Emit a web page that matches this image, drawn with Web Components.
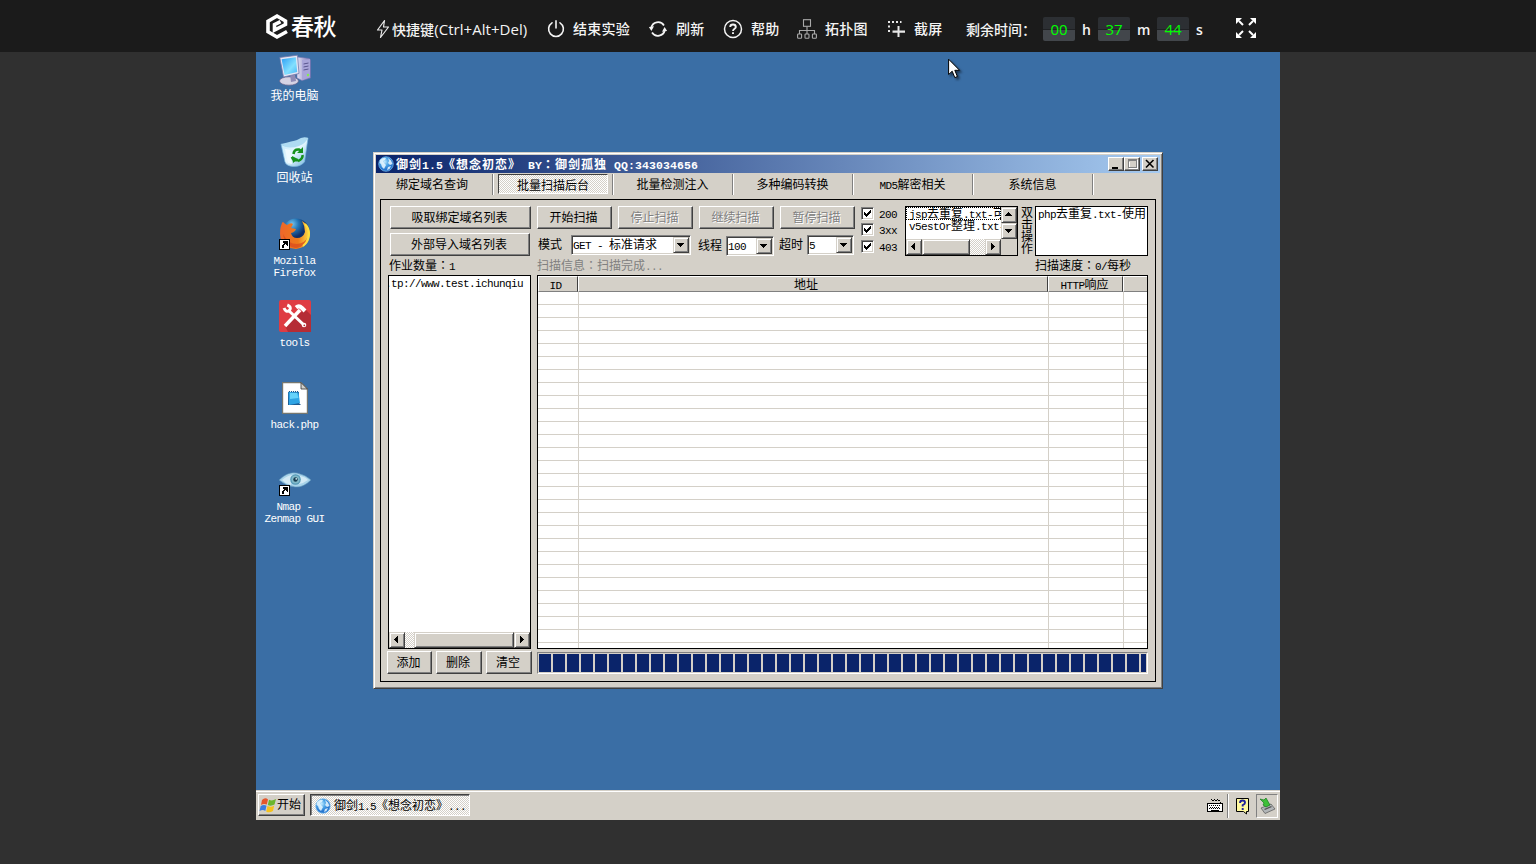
<!DOCTYPE html>
<html lang="zh-CN">
<head>
<meta charset="utf-8">
<title>e春秋</title>
<style>
html,body{margin:0;height:100%;overflow:hidden;background:#303030}
</style>
</head>
<body>
<lab-page></lab-page>
<script>
const define = (name, css, html) => customElements.define(name, class extends HTMLElement {
  connectedCallback() {
    if (this.shadowRoot) return;
    const root = this.attachShadow({mode: 'open'});
    root.innerHTML = `<style>*{box-sizing:border-box}:host{box-sizing:border-box;display:block;flex:none}${css}</style>` +
      (typeof html === 'function' ? html(this) : html);
  }
});

/* Text on the 6/12 px character grid of the remote desktop */
define('px-text', `
:host{display:inline-block;white-space:pre;font:12px/10px "Noto Sans CJK SC",sans-serif;height:12px;vertical-align:top}
.l{font-family:"Liberation Mono",monospace;font-size:11px;letter-spacing:-.6px}
.c{font-family:"Noto Sans CJK TC",sans-serif}
:host([bold]){font-weight:700;letter-spacing:1px;line-height:12px}
:host([bold]) .l{font-size:11.5px;letter-spacing:.1px}
`, el => el.getAttribute('t').replace(/[\x20-\x7e]+|：/g, m => m === '：' ? `<span class="c" lang="zh-TW">${m}</span>` : `<span class="l">${m}</span>`));

/* ---------- top bar ---------- */
define('bar-item', `
:host{display:flex;align-items:center;height:24px;width:var(--w);color:#f4f4f4;font:500 14px/24px "Open Sans","Noto Sans CJK SC",sans-serif;white-space:nowrap;letter-spacing:var(--ls,.25px)}
.i{width:var(--iw);flex:none;display:flex;align-items:center}
`, `<span class="i"><slot name="icon"></slot></span><slot></slot>`);
define('time-box', `
:host{width:32px;height:24px;background:linear-gradient(#2c2f33 0 12px,#1f2124 12px 13px,#42464b 13px);border-radius:2px;color:#0f0;text-align:center;font:15px/25px "Open Sans",sans-serif}
`, `<slot></slot>`);
define('top-bar', `
:host{display:flex;height:52px;background:#1b1b1b;padding-left:265px;align-items:flex-start}
.logo{display:flex;width:111px;height:28px;margin-top:13px;color:#fff;font:500 23px/25px "Noto Sans CJK SC",sans-serif;letter-spacing:-.6px}
.logo svg{margin-right:2px;flex:none}
bar-item{margin-top:17px}
.clock{display:flex;width:270px;margin-top:17px;color:#f4f4f4;font:500 14px/26px "Open Sans","Noto Sans CJK SC",sans-serif}
.lab{width:77px;white-space:nowrap}.u{padding-left:7px;flex:none;font-weight:600}
.full{margin-top:18px}
`, `
<div class="logo"><svg width="24" height="27" viewBox="0 0 24 27" fill="none" stroke="#fff" stroke-width="3.6" stroke-linejoin="miter"><path d="M22 18.5 L12 24 L3 18.8 V8.2 L12 3 L20.5 8 V11.5 L9.5 17 V11.7 L15.5 8.7"/></svg><span>春秋</span></div>
<bar-item style="--w:171px;--iw:16px;--ls:.05px"><svg slot="icon" width="14" height="20" viewBox="0 0 14 20" fill="none" stroke="#e8e8e8" stroke-width="1.2" stroke-linejoin="round"><path d="M8.5 1.5 L1.5 11 H6 L4.5 18.5 L12.5 8 H7.5 Z"/></svg><span>快捷键<span style="font-size:15px">(Ctrl+Alt+Del)</span></span></bar-item>
<bar-item style="--w:102px;--iw:26px"><svg slot="icon" width="18" height="18" viewBox="0 0 18 18" fill="none" stroke="#f4f4f4" stroke-width="1.6" stroke-linecap="round"><path d="M5 2.8 A7.4 7.4 0 1 0 13 2.8 M9 .9 V8"/></svg>结束实验</bar-item>
<bar-item style="--w:74px;--iw:27px"><svg slot="icon" width="18" height="18" viewBox="0 0 18 18" fill="none" stroke="#f4f4f4" stroke-width="1.7"><path d="M2.2 8 A7 7 0 0 1 15 5.5 M15.8 10 A7 7 0 0 1 3 12.5"/><path fill="#f4f4f4" stroke="none" d="M-.2 7 L5 6.3 L2.4 11Z M18.2 11 L13 11.7 L15.6 7Z"/></svg>刷新</bar-item>
<bar-item style="--w:74px;--iw:28px"><svg slot="icon" width="20" height="20" viewBox="0 0 20 20" fill="none" stroke="#f4f4f4"><circle cx="10" cy="10" r="8.5" stroke-width="1.5"/><path stroke-width="1.9" d="M7.2 8 C7.2 4.7 12.8 4.7 12.8 8 C12.8 9.8 10 9.6 10 12 M10 13.2 V15"/></svg>帮助</bar-item>
<bar-item style="--w:91px;--iw:28px"><svg slot="icon" width="20" height="20" viewBox="0 0 20 20" fill="none" stroke="#aaa" stroke-width="1.1"><rect x="6.5" y=".7" width="7" height="6.6"/><path d="M10 7.5 V15 M2.5 15 V11.5 H17.5 V15"/><rect x=".6" y="15" width="4" height="4.2" rx=".8"/><rect x="8" y="15" width="4" height="4.2" rx=".8"/><rect x="15.4" y="15" width="4" height="4.2" rx=".8"/></svg>拓扑图</bar-item>
<bar-item style="--w:78px;--iw:26px"><svg slot="icon" width="18" height="18" viewBox="0 0 18 18" fill="#e8e8e8"><path d="M0 1h2v2H0zM4 1h2v2H4zM8 1h2v2H8zM12 1h1.5v2H12zM0 5.500h2v2H0zM0 10h2v2H0zM9.500 6h2v4.500h5.500v2.200h-5.500v4.300h-2v-4.300H4.500v-2.200h5z"/></svg>截屏</bar-item>
<div class="clock"><span class="lab">剩余时间：</span><time-box>00</time-box><span class="u" style="width:23px">h</span><time-box>37</time-box><span class="u" style="width:27px">m</span><time-box>44</time-box><span class="u">s</span></div>
<svg class="full" width="20" height="20" viewBox="0 0 20 20" fill="#fff" stroke="#fff" stroke-width="2"><path d="M3 3 L7 7 M17 3 L13 7 M3 17 L7 13 M17 17 L13 13"/><path stroke="none" d="M0 0H6L0 6ZM20 0H14L20 6ZM0 20H6L0 14ZM20 20H14L20 14Z"/></svg>
`);

/* ---------- classic controls ---------- */
define('c-button', `
:host{display:flex;align-items:center;justify-content:center;height:23px;background:#d4d0c8;border:1px solid;border-color:#fff #404040 #404040 #fff;box-shadow:inset -1px -1px #808080;padding:0 2px 0 0}
:host([disabled]){color:#808080;text-shadow:1px 1px #fff}
`, `<slot></slot>`);
define('c-arrow', `
:host{display:flex;align-items:center;justify-content:center;width:16px;height:var(--h,16px);background:#d4d0c8;border:1px solid;border-color:#d4d0c8 #404040 #404040 #d4d0c8;box-shadow:inset 1px 1px #fff,inset -1px -1px #808080;padding:0 1px 1px 0}
`, el => `<svg width="7" height="7" viewBox="0 0 7 7" shape-rendering="crispEdges"><path d="${{
  down:'M0 2h7v1H0zM1 3h5v1H1zM2 4h3v1H2zM3 5h1v1H3z', up:'M3 1h1v1H3zM2 2h3v1H2zM1 3h5v1H1zM0 4h7v1H0z',
  left:'M1 3h1v1H1zM2 2h1v3H2zM3 1h1v5H3zM4 0h1v7H4z', right:'M5 3h1v1H5zM4 2h1v3H4zM3 1h1v5H3zM2 0h1v7H2z'}[el.getAttribute('dir')]}"/></svg>`);
define('c-hscroll', `
:host{display:flex;height:16px;background:repeating-conic-gradient(#fff 0 25%,#d4d0c8 0 50%) 0 0/2px 2px}
.thumb{width:var(--t);margin-left:var(--a,0);margin-right:auto;background:#d4d0c8;border:1px solid;border-color:#d4d0c8 #404040 #404040 #d4d0c8;box-shadow:inset 1px 1px #fff,inset -1px -1px #808080}
`, `<c-arrow dir="left"></c-arrow><div class="thumb"></div><c-arrow dir="right"></c-arrow>`);
define('c-combo', `
:host{display:flex;height:20px;background:#fff;border:1px solid;border-color:#808080 #fff #fff #808080;box-shadow:inset 1px 1px #404040,inset -1px -1px #d4d0c8;padding:1px 1px 1px 1px}
px-text{margin-top:2px;flex:1}
c-arrow{--h:16px}
`, el => `<px-text t="${el.getAttribute('value')}"></px-text><c-arrow dir="down"></c-arrow>`);
define('c-check', `
:host{display:flex;height:13px;gap:5px}
.b{width:13px;height:13px;background:#fff;border:1px solid;border-color:#808080 #fff #fff #808080;box-shadow:inset 1px 1px #404040,inset -1px -1px #d4d0c8}
svg{display:block;margin:2px}
px-text{margin-top:1px}
`, el => `<div class="b"><svg width="7" height="7" viewBox="0 0 7 7" shape-rendering="crispEdges"><path d="M0 2h1v3H0zM1 3h1v3H1zM2 4h1v3H2zM3 3h1v3H3zM4 2h1v3H4zM5 1h1v3H5zM6 0h1v3H6z"/></svg></div><px-text t="${el.getAttribute('label')}"></px-text>`);
define('globe-icon', `:host{width:16px;height:16px}svg{display:block}`,
`<svg width="16" height="16" viewBox="0 0 16 16"><defs><radialGradient id="g" cx=".4" cy=".35"><stop offset="0" stop-color="#c4ebff"/><stop offset=".55" stop-color="#4da6e8"/><stop offset="1" stop-color="#2877cf"/></radialGradient></defs><circle cx="8" cy="8" r="7.3" fill="url(#g)" stroke="#7dc0f0" stroke-width=".7"/><path fill="#eaf8ff" opacity=".85" d="M2 4 Q5 1 8 2 L7 4 L5 5 L6 7 L8 9 L6 13 L4 11 L3 8 L1.5 7ZM10 2 L13 4.5 L14.5 8 L12 9 L10 7 L11 5ZM10 11 L13 10 L11.5 13 L9 14Z"/></svg>`);

/* ---------- scanner window ---------- */
define('title-bar', `
:host{display:flex;height:18px;padding:2px 2px 0 2px;background:linear-gradient(90deg,#0a246a,#a6caf0);color:#fff}
globe-icon{margin:-1px 2px 0 0}
px-text{margin:1px auto 0 0}
.b{width:16px;height:14px;background:#d4d0c8;border:1px solid;border-color:#fff #404040 #404040 #fff;box-shadow:inset -1px -1px #808080}
.x{margin-left:2px}svg{display:block}
`, `<globe-icon></globe-icon><px-text bold t="御剑1.5《想念初恋》 BY：御剑孤独 QQ:343034656"></px-text>
<div class="b"><svg width="14" height="12"><path d="M3 9h6v2H3z"/></svg></div>
<div class="b"><svg width="14" height="12" fill="none" shape-rendering="crispEdges"><path stroke="#fff" d="M4 3.5V10.5H12.5V2"/><path fill="#808080" d="M3 1h9v9H3zM4 3v6h7V3z" fill-rule="evenodd"/></svg></div>
<div class="b x"><svg width="14" height="12" stroke="#000" stroke-width="1.6"><path d="M3 2L10.5 9.5M10.5 2L3 9.5"/></svg></div>`);
define('tab-strip', `
:host{display:flex;height:22px;padding-top:1px}
.t{width:120px;height:21px;padding:5px 2px 0 0;text-align:center;border-right:1px solid #fff;box-shadow:inset -1px 0 #808080}
.f{width:118px;padding:5px 5px 0 0}
.s{padding:0 5px 0 4px}
.s div{height:20px;padding-top:5px;border:1px solid;border-color:#404040 #fff #fff #404040;background:repeating-conic-gradient(#fff 0 25%,#d4d0c8 0 50%) 0 0/2px 2px}
`, ['绑定域名查询','批量扫描后台','批量检测注入','多种编码转换','MD5解密相关','系统信息'].map((s, i) =>
  i === 1 ? `<div class="t s"><div><px-text t="${s}"></px-text></div></div>` : `<div class="t${i ? '' : ' f'}"><px-text t="${s}"></px-text></div>`).join(''));
define('file-list', `
:host{display:flex;flex-direction:column;width:113px;height:50px;border:1px solid #000;background:#fff}
.top{display:flex;height:32px}
.rows{width:95px;overflow:hidden}
.rows div{height:13px;margin-bottom:-1px;padding:1px 0 0 3px;overflow:hidden;white-space:nowrap}
.rows div:first-child{outline:1px dotted #000;outline-offset:-1px}
.bot{display:flex;background:#d4d0c8}
c-hscroll{width:95px;--t:48px}
`, `<div class="top"><div class="rows"><div><px-text t="jsp去重复.txt-可"></px-text></div><div><px-text t="v5estOr整理.txt-"></px-text></div></div><div><c-arrow dir="up"></c-arrow><c-arrow dir="down"></c-arrow></div></div><div class="bot"><c-hscroll></c-hscroll></div>`);
define('control-row', `
:host{display:flex;height:50px;padding-left:9px}
.a{width:147px;display:flex;flex-direction:column;gap:4px}
.m{width:324px}.r{display:flex;gap:6px}.r c-button{width:75px}
.q{display:flex;padding:6px 0 0 1px}.q px-text{margin-top:4px}
.k{width:44px;padding-top:1px;display:flex;flex-direction:column;gap:3px}
.v{width:17px;padding:1px 2px 0 3px;height:50px}.v px-text{display:block}
.p{width:113px;height:50px;border:1px solid #000;background:#fff;overflow:hidden;padding:1px 2px;white-space:nowrap}
`, `
<div class="a"><c-button style="width:141px"><px-text t="吸取绑定域名列表"></px-text></c-button><c-button style="width:140px"><px-text t="外部导入域名列表"></px-text></c-button></div>
<div class="m"><div class="r"><c-button><px-text t="开始扫描"></px-text></c-button><c-button disabled><px-text t="停止扫描"></px-text></c-button><c-button disabled><px-text t="继续扫描"></px-text></c-button><c-button disabled><px-text t="暂停扫描"></px-text></c-button></div>
<div class="q"><px-text t="模式" style="width:33px"></px-text><c-combo value="GET - 标准请求" style="width:120px;margin-right:7px"></c-combo><px-text t="线程" style="width:28px;margin-top:5px"></px-text><c-combo value="100" style="width:48px;margin:1px 5px 0 0"></c-combo><px-text t="超时" style="width:28px"></px-text><c-combo value="5" style="width:47px"></c-combo></div></div>
<div class="k"><c-check label="200"></c-check><c-check label="3xx"></c-check><c-check label="403" style="margin-top:1px"></c-check></div>
<file-list></file-list>
<div class="v"><px-text t="双"></px-text><px-text t="击"></px-text><px-text t="操"></px-text><px-text t="作"></px-text></div>
<div class="p"><px-text t="php去重复.txt-使用"></px-text></div>`);
define('domain-list', `
:host{display:flex;flex-direction:column;justify-content:space-between;width:143px;height:374px;border:1px solid #000;background:#fff;overflow:hidden}
div{margin:1px 0 0 -4px;white-space:nowrap}
c-hscroll{--a:9px;--t:100px}
`, `<div><px-text t=".tp://www.test.ichunqiu"></px-text></div><c-hscroll></c-hscroll>`);
define('result-table', `
:host{width:611px;height:374px;border:1px solid #000;background:#fff}
.h,.b{display:grid;grid-template-columns:40px 470px 75px 24px}
.h div{height:16px;background:#d4d0c8;text-align:center;padding:2px 5px 0 0;border:1px solid;border-color:#fff #404040 #808080 #fff}
.h .addr{padding-right:14px}.h .resp{padding-right:2px}
.h div:last-child{border-right:0}
.b{height:356px;background:repeating-linear-gradient(#fff 0 12px,#d4d0c8 12px 13px)}
.b i+i{border-left:1px solid #d4d0c8}
`, `<div class="h"><div><px-text t="ID"></px-text></div><div class="addr"><px-text t="地址"></px-text></div><div class="resp"><px-text t="HTTP响应"></px-text></div><div></div></div><div class="b"><i></i><i></i><i></i><i></i></div>`);
define('scan-window', `
:host{width:790px;height:537px;background:#d4d0c8;border:1px solid;border-color:#d4d0c8 #404040 #404040 #d4d0c8;box-shadow:inset 1px 1px #fff,inset -1px -1px #808080;padding:2px}
.panel{margin:4px 4px 0 4px;height:483px;width:776px;border:1px solid #000;padding-top:6px}
.info{display:flex;height:19px;padding:4px 0 0 8px}
.main{display:flex;gap:6px;padding-left:7px;height:376px}
.foot{display:flex;padding-left:6px}
.bar{width:611px;height:22px;margin:1px 0 0 5px;padding:1px;border:1px solid;border-color:#808080 #fff #fff #808080}
.bar div{height:18px;background:repeating-linear-gradient(90deg,#0a246a 0 12px,#d4d0c8 12px 14px)}
`, `
<title-bar></title-bar><tab-strip></tab-strip>
<div class="panel">
<control-row></control-row>
<div class="info"><px-text t="作业数量：1" style="width:148px"></px-text><px-text t="扫描信息：扫描完成..." style="width:498px;color:#808080"></px-text><px-text t="扫描速度：0/每秒"></px-text></div>
<div class="main"><domain-list></domain-list><result-table></result-table></div>
<div class="foot"><c-button style="width:45px"><px-text t="添加"></px-text></c-button><c-button style="width:46px;margin:0 4px"><px-text t="删除"></px-text></c-button><c-button style="width:46px"><px-text t="清空"></px-text></c-button><div class="bar"><div></div></div></div>
</div>`);

/* ---------- desktop ---------- */
define('desk-icon', `
:host{width:78px;height:82px;text-align:center;color:#fff}
::slotted(svg){display:block;margin:0 auto 4px}
px-text{display:block;margin-right:1px}
`, el => `<slot></slot>` + el.getAttribute('label').split('|').map(s => `<px-text t="${s}"></px-text>`).join(''));
const arrow = `<g shape-rendering="crispEdges"><path fill="#fff" stroke="#000" d="M.5 21.5h10v10H.5z"/><path d="M4 23h5v5H8v-1H7v-1H6v1H5v3H3v-3h1v-1h1v-1H4z"/></g>`;
define('desk-top', `
:host{position:relative;height:738px;background:#3a6ea5;padding-top:2px}
scan-window{position:absolute;left:117px;top:100px}
.cur{position:absolute;left:692px;top:6px;filter:drop-shadow(2px 2px 1px rgba(0,0,0,.5))}
`, `
<desk-icon label="我的电脑"><svg width="32" height="32" viewBox="0 0 32 32"><defs><linearGradient id="s" x2="1" y2="1"><stop stop-color="#2b9df4"/><stop offset=".6" stop-color="#83e0ff"/><stop offset="1" stop-color="#47b6f5"/></linearGradient><linearGradient id="m" x2="1"><stop stop-color="#e3e2f5"/><stop offset="1" stop-color="#7873b3"/></linearGradient></defs><path fill="url(#m)" stroke="#7d79b6" stroke-width=".6" d="M18 3 L30 4.5 Q32 5 31.5 8 V24 L23 26.5 L18 24Z"/><path fill="#a9a5d9" d="M23 6 L31 5 V23.5 L23 26Z"/><path stroke="#5a568f" d="M24.5 10l5-1M24.5 13l5-1M24.5 16l5-1"/><circle cx="29" cy="21" r="1.2" fill="#84ed4e"/><ellipse cx="10" cy="27" rx="9.5" ry="4.2" fill="#d5d3e4" stroke="#66628a" stroke-width=".7"/><path fill="#8f8bb5" d="M11 20h5l1 7-5 1z"/><path fill="#e5e7f5" stroke="#737aac" stroke-width=".8" d="M.8 3.5 L18.5 1.2 L20 19.5 L4.5 23Z"/><path fill="url(#s)" d="M2.6 5.3 L16.8 3.3 L18.2 18 L5.6 21Z"/></svg></desk-icon>
<desk-icon label="回收站"><svg width="32" height="32" viewBox="0 0 32 32"><defs><linearGradient id="b" x2="1" y2="1"><stop stop-color="#b9e4f8"/><stop offset=".5" stop-color="#e7f8ff"/><stop offset="1" stop-color="#6fb2dd"/></linearGradient></defs><path fill="url(#b)" stroke="#79b7df" stroke-width=".7" d="M2 8 Q7 12 17 8 Q25 2 29 2 L25.5 26 Q20 32 11 30 Q7 29 6 26Z"/><path fill="#aedbf2" d="M2 8 Q14 5 18 4 Q24 0 29 2 Q27 7 20 10 Q8 14 2 8Z"/><path fill="#eefaff" d="M6 13 L11 14 L13 28 L9 27Z"/><g fill="none" stroke="#15911c" stroke-width="2.6"><path d="M14.5 18 Q15 13 20 13.5 L22 15M23.5 19 Q24 23 19 25M13 21 Q14 25 19 24"/></g><path fill="#15911c" d="M24 11v6h-6zM13 20l6 3-5 4z"/></svg></desk-icon>
<desk-icon label="Mozilla|Firefox"><svg width="32" height="32" viewBox="0 0 32 32"><defs><radialGradient id="f" cx=".35" cy=".2"><stop stop-color="#73c4ee"/><stop offset=".5" stop-color="#2374b4"/><stop offset="1" stop-color="#102e68"/></radialGradient><linearGradient id="o" x2="1"><stop stop-color="#ee672b"/><stop offset=".6" stop-color="#ee7a1b"/><stop offset="1" stop-color="#ffe24a"/></linearGradient></defs><circle cx="17" cy="14" r="13.500" fill="url(#f)"/><path fill="url(#o)" d="M3 5 Q4 3 5 5 L8 7 Q12 4 14 6 L12 10 L17 11 Q16 14 12 15 Q13 20 18 20 Q24 20 26 14 Q26 8 23 3 Q30 7 31 15 Q31 29 17 31 Q5 31 1.5 20 Q0 12 3 5Z"/><path fill="#d94b1e" d="M4 16Q9 26 18 26Q26 25 28 20Q27 29 17 30Q6 29 4 16Z" opacity=".75"/><path stroke="#ffdf3f" stroke-width="2" fill="none" d="M26 6 Q30 10 30 16 Q29 24 24 28"/>${arrow}</svg></desk-icon>
<desk-icon label="tools"><svg width="32" height="32" viewBox="0 0 32 32"><rect width="32" height="32" rx="2" fill="#df3c43"/><path fill="#b52c35" d="M26 9L32 15V32H9L6 26Z"/><g fill="none" stroke="#fff"><path stroke-width="3" d="M9 10 L25 25"/><path stroke-width="3.4" d="M6 26 L21 10"/><path stroke-width="3" d="M8.3 5 Q13 7 10.5 10.5 Q7 13 5 8"/><path stroke-width="4" d="M17 7.5 Q20 5 23 8 L26 11"/></g><circle cx="25" cy="25" r="2.3" fill="#fff"/><circle cx="25.3" cy="25.3" r=".9" fill="#b52c35"/></svg></desk-icon>
<desk-icon label="hack.php"><svg width="32" height="32" viewBox="0 0 32 32"><path fill="#fff" stroke="#77776e" stroke-width="1.2" d="M3.6.6H22L28.4 7V31.4H3.6Z"/><path fill="#d0d0cc" stroke="#333" stroke-width=".8" d="M22 .6V7H28.4Z"/><path fill="#1c5b91" d="M9 9H20V21L22 23H9Z"/><path fill="#2fa4e4" d="M9.500 10L19.500 10.500L21 21L10 23Z"/><path fill="#66d2fa" d="M11 11L18 11L19.500 16L11 17Z"/><path stroke="#eee" stroke-dasharray="1 1" d="M9 9.500H20"/></svg></desk-icon>
<desk-icon label="Nmap -|Zenmap GUI"><svg width="32" height="32" viewBox="0 0 32 32"><path fill="#a9d4ea" stroke="#578fb6" stroke-width=".6" d="M0 16 Q9 7 18 9 Q27 11 32 16 Q24 24 16 23 Q7 22 0 16Z"/><path fill="#d3eaf5" d="M3 16 Q9 11 14 11 L12 21 Q7 20 3 16ZM21 12Q27 13 29 16Q25 19 20 20Z"/><circle cx="16.500" cy="15.500" r="5.300" fill="#5599b7"/><circle cx="16.500" cy="15.500" r="4" fill="#82b9c8"/><circle cx="16.500" cy="15.500" r="2.200" fill="#173c50"/><circle cx="17.200" cy="14.900" r=".8" fill="#e7f9ff"/>${arrow}</svg></desk-icon>
<scan-window></scan-window>
<svg class="cur" width="13" height="21" viewBox="0 0 13 21"><path fill="#fff" stroke="#000" d="M.6 1.2 V16.5 L4.2 13.2 L6.8 19.6 L9.4 18.5 L6.8 12.3 H11.6Z"/></svg>`);
define('task-bar', `
:host{display:flex;height:30px;background:#d4d0c8;padding:3px 2px 2px;border-top:1px solid #d4d0c8;box-shadow:inset 0 1px #fff}
.st{width:47px;height:22px;display:flex;padding:2px 0 0 0;background:#d4d0c8;border:1px solid;border-color:#fff #404040 #404040 #fff;box-shadow:inset -1px -1px #808080}
.st px-text{margin-top:2px}
.tk{display:flex;width:160px;height:22px;margin:0 auto 0 5px;padding:3px 0 0 4px;border:1px solid;border-color:#404040 #fff #fff #404040;box-shadow:inset 1px 1px #808080;background:repeating-conic-gradient(#fff 0 25%,#d4d0c8 0 50%) 0 0/2px 2px}
.tk px-text{margin:2px 0 0 3px}
.sep{width:2px;height:24px;background:linear-gradient(90deg,#808080 50%,#fff 50%)}
.nb{width:22px;height:24px;margin-left:5px;padding:2px;border:1px solid;border-color:#808080 #fff #fff #808080}
svg{display:block;flex:none}
`, `
<div class="st"><svg width="18" height="17" viewBox="0 0 18 17"><path fill="#e5562b" d="M3 3Q6 0 9 2.4L7.8 7.6Q5 6 2 8Z"/><path fill="#6ab62d" d="M10 2.8Q13 4.500 17 2L15.500 7.500Q12 9.500 8.800 8Z"/><path fill="#3b7de0" d="M1.700 9Q5 7 7.500 8.800L6.300 14Q4 12 .5 14Z"/><path fill="#f5c21c" d="M8.500 9Q12 10.600 15.200 8.500L14 14Q10 16.500 7.200 14.400Z"/></svg><px-text t="开始"></px-text></div>
<div class="tk"><globe-icon></globe-icon><px-text t="御剑1.5《想念初恋》..."></px-text></div>
<svg width="20" height="22" viewBox="0 0 20 22" shape-rendering="crispEdges"><path fill="none" stroke="#000" d="M4 5.500h1M5 6.500h2M7 5.500h1M8 6.500h2M10 5.500h1M11 6.500h2M13 7.500v2"/><rect x=".5" y="9.500" width="15" height="8" fill="#fff" stroke="#000"/><path stroke="#000" stroke-dasharray="1 1" d="M2 11.500h12M3 13.500h10M2 14.500h12"/><path stroke="#000" d="M4 16.500h8"/></svg>
<div class="sep"></div>
<svg width="16" height="22" viewBox="0 0 16 22" style="margin-left:6px"><path fill="#fff9a0" stroke="#000" d="M1.500 4.500h12v13h-2v2.500l-3-2.500h-7z"/><path fill="none" stroke="#22229c" stroke-width="1.900" d="M5 9Q5 6.500 7.500 6.500Q10 6.500 10 8.800Q10 10.200 7.700 11.200V12.500M7.700 14V16"/></svg>
<div class="nb"><svg width="18" height="18" viewBox="0 0 18 18"><path fill="#b2b6b8" stroke="#555" stroke-width=".7" d="M2 11L12 7L16 12L6 16.500Z"/><path fill="#555" d="M5 12l7-3 1 1-7 3z"/><path fill="#3ebf37" stroke="#147a1c" stroke-width=".7" d="M1 2L5 3L7 1L11 8L7 10L4 8L5 6Z"/></svg></div>`);
define('lab-page', `.d{width:1024px;margin-left:256px}`, `<top-bar></top-bar><div class="d"><desk-top></desk-top><task-bar></task-bar></div>`);
</script>
</body>
</html>
